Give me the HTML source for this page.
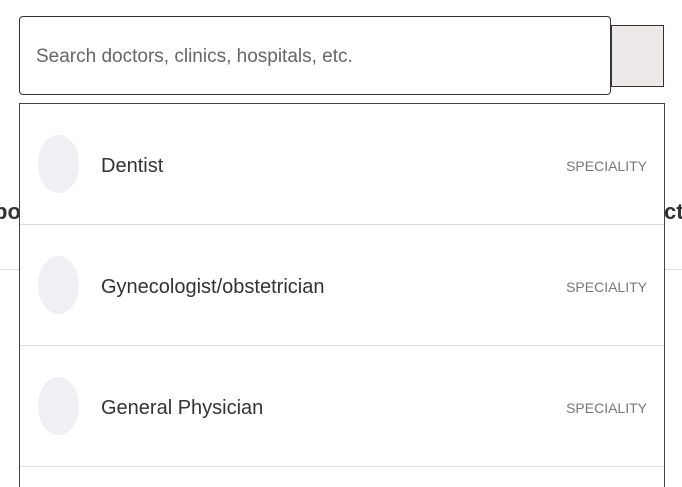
<!DOCTYPE html>
<html><head><style>
html,body{margin:0;width:682px;height:487px;overflow:hidden;background:#fff;font-family:"Liberation Sans",sans-serif;position:relative}
.bgt{position:absolute;top:199px;font-weight:bold;font-size:22px;color:#333}
.hr{position:absolute;left:0;right:0;top:269px;border-top:1px solid #ddd}
.inp{position:absolute;left:19px;top:16px;width:590px;height:77px;border:1px solid #333;border-radius:4px;background:#fff}
.inp span{position:absolute;left:16px;top:29px;font-size:19px;color:#666}
.btn{position:absolute;left:611px;top:25px;width:51px;height:60px;border:1px solid #333;background:#ede9e9}
.dd{position:absolute;left:19px;top:103px;width:644px;height:400px;border:1px solid #444;background:#fff}
.row{position:relative;height:120px;border-bottom:1px solid #ddd}
.c{position:absolute;left:18px;top:31px;width:41px;height:58px;border-radius:50%;background:#efeff4}
.n{position:absolute;left:81px;top:51px;font-size:20px;color:#333}
.s{position:absolute;right:17px;top:54px;font-size:14px;color:#777}
</style></head><body>
<div class="bgt" style="left:-6px">bo</div>
<div class="bgt" style="left:664px">ct</div>
<div class="hr"></div>
<div class="inp"><span>Search doctors, clinics, hospitals, etc.</span></div>
<div class="btn"></div>
<div class="dd">
<div class="row"><div class="c"></div><div class="n">Dentist</div><div class="s">SPECIALITY</div></div>
<div class="row"><div class="c"></div><div class="n">Gynecologist/obstetrician</div><div class="s">SPECIALITY</div></div>
<div class="row"><div class="c"></div><div class="n">General Physician</div><div class="s">SPECIALITY</div></div>
</div>
</body></html>
